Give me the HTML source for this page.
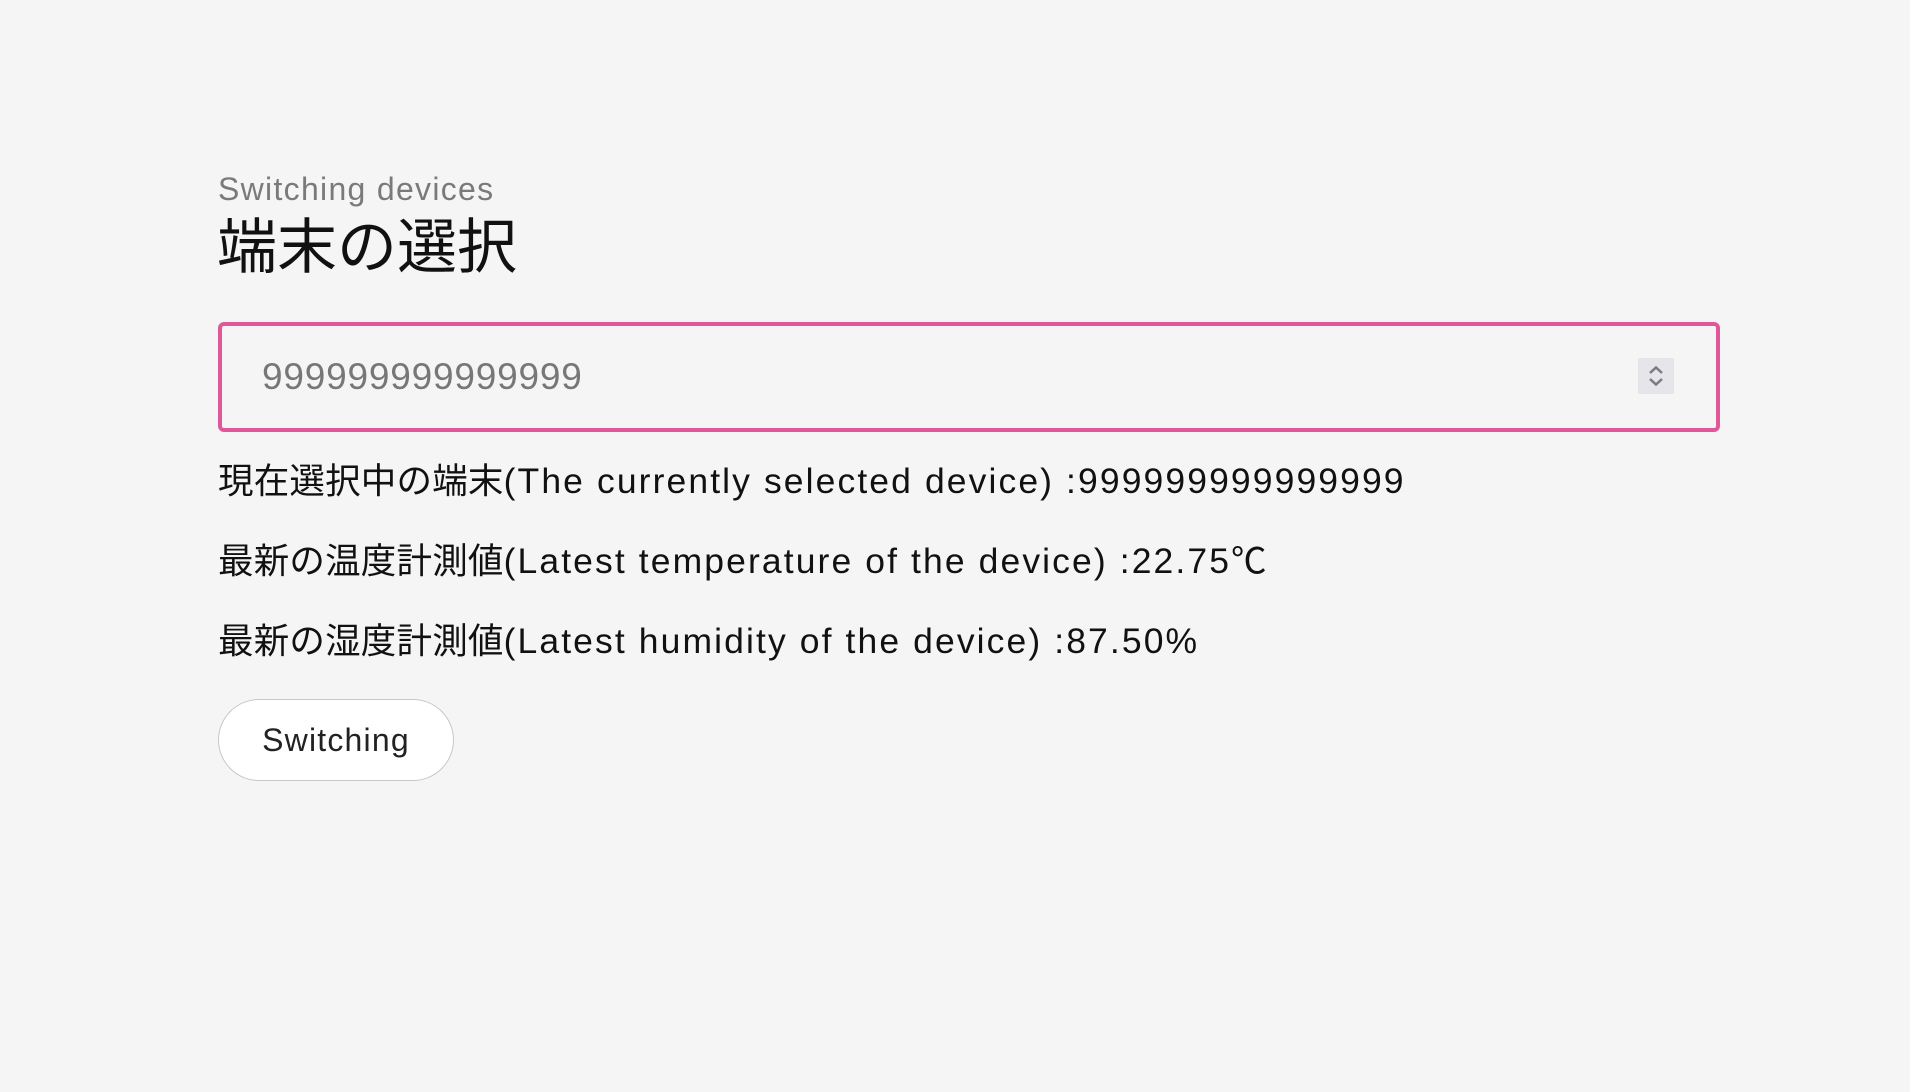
<!DOCTYPE html>
<html><head><meta charset="utf-8"><style>
html,body{margin:0;padding:0;background:#f5f5f5;width:1910px;height:1092px;overflow:hidden;font-family:"Liberation Sans","Noto Sans CJK JP",sans-serif;}
.abs{position:absolute;white-space:nowrap;}
.sub{left:218px;top:171px;font-size:32px;color:#7a7a7a;letter-spacing:1.3px;}
.title{left:217px;top:213px;font-size:60px;color:#111;line-height:70px;}
.box{left:218px;top:322px;width:1494px;height:102px;border:4px solid #e0589a;border-radius:6px;}
.val{left:262px;top:356px;font-size:37px;color:#777;letter-spacing:0.8px;}
.spin{left:1638px;top:358px;width:36px;height:36px;background:#e6e6ea;}
.line{left:218px;font-size:35.5px;color:#111;letter-spacing:2.1px;}
.line span{letter-spacing:0.2px;}
.btn{left:218px;top:699px;width:236px;height:82px;border:1.5px solid #c8c8c8;border-radius:41px;background:#fff;box-sizing:border-box;text-align:center;line-height:80px;font-size:32px;color:#222;letter-spacing:1.2px;}
</style></head><body>
<div class="abs sub">Switching devices</div>
<div class="abs title">端末の選択</div>
<div class="abs box"></div>
<div class="abs val">999999999999999</div>
<div class="abs spin"><svg width="36" height="36" viewBox="0 0 36 36"><path d="M12 15 L18 9.5 L24 15" fill="none" stroke="#7b7b85" stroke-width="2.5"/><path d="M12 21 L18 26.5 L24 21" fill="none" stroke="#7b7b85" stroke-width="2.5"/></svg></div>
<div class="abs line" style="top:453px"><span>現在選択中の端末</span>(The currently selected device) :999999999999999</div>
<div class="abs line" style="top:533px"><span>最新の温度計測値</span>(Latest temperature of the device) :22.75℃</div>
<div class="abs line" style="top:613px"><span>最新の湿度計測値</span>(Latest humidity of the device) :87.50%</div>
<div class="abs btn">Switching</div>
</body></html>
